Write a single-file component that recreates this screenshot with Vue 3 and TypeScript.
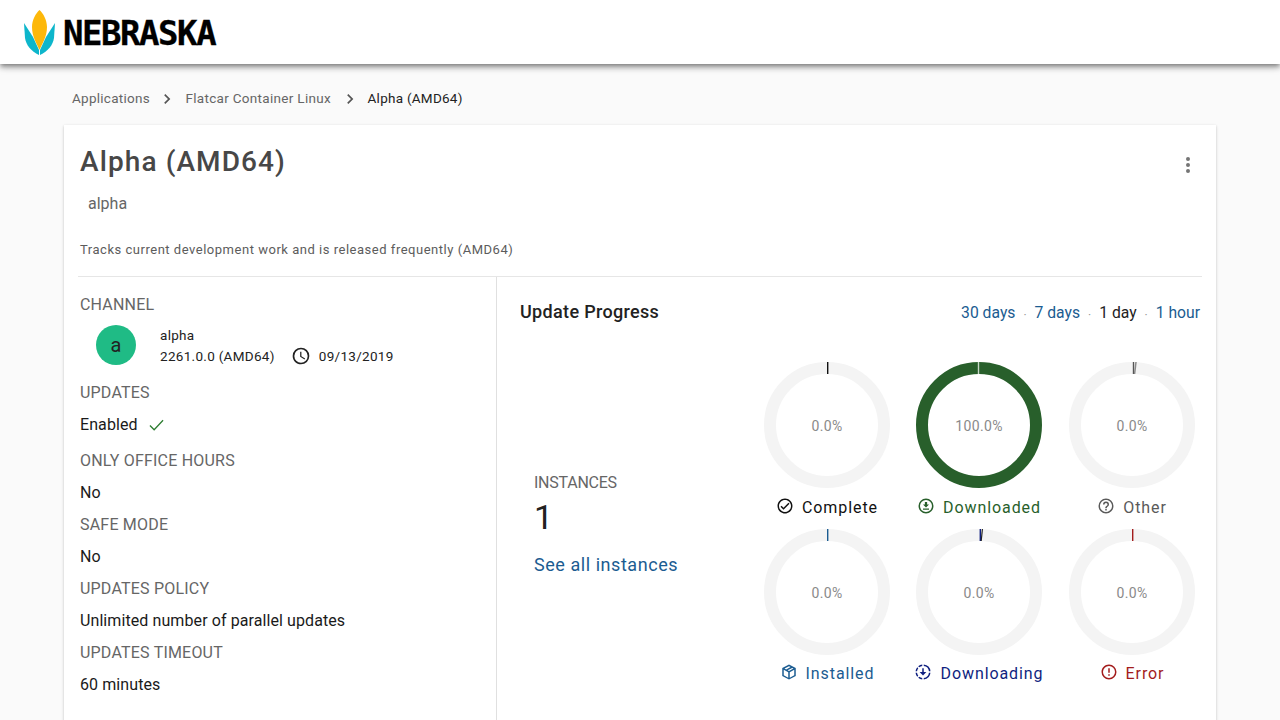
<script setup lang="ts">
interface Donut { label: string; value: string; color: string; icon: string; tick: string; tickX: number; fill?: boolean }

const icons: Record<string, string> = {
  complete: 'M12 2C6.5 2 2 6.5 2 12S6.5 22 12 22 22 17.5 22 12 17.5 2 12 2M12 20C7.59 20 4 16.41 4 12S7.59 4 12 4 20 7.59 20 12 16.41 20 12 20M16.59 7.58L10 14.17L7.41 11.59L6 13L10 17L18 9L16.59 7.58Z',
  downloaded: 'M12 2A10 10 0 0 0 2 12A10 10 0 0 0 12 22A10 10 0 0 0 22 12A10 10 0 0 0 12 2M12 20A8 8 0 0 1 4 12A8 8 0 0 1 12 4A8 8 0 0 1 20 12A8 8 0 0 1 12 20M8 17H16V15.2H8V17M16 10H13.5V6.5H10.5V10H8L12 14L16 10Z',
  other: 'M11,18H13V16H11V18M12,2A10,10 0 0,0 2,12A10,10 0 0,0 12,22A10,10 0 0,0 22,12A10,10 0 0,0 12,2M12,20C7.59,20 4,16.41 4,12C4,7.59 7.59,4 12,4C16.41,4 20,7.59 20,12C20,16.41 16.41,20 12,20M12,6A4,4 0 0,0 8,10H10A2,2 0 0,1 12,8A2,2 0 0,1 14,10C14,12 11,11.75 11,15H13C13,12.75 16,12.5 16,10A4,4 0 0,0 12,6Z',
  installed: 'M12 2L3 6.8V17.2L12 22L21 17.2V6.8L12 2M12 4.3L14.1 5.4L8.2 8.6L6 7.4L12 4.3M16.2 6.5L18 7.4L12 10.6L10.2 9.7L16.2 6.5M5 9.1L11 12.3V19.5L5 16.2V9.1M19 9.1V16.2L13 19.5V12.3L19 9.1Z',
  downloading: 'M13 2.05V4.07A8 8 0 0 1 19.93 11H21.95A10 10 0 0 0 13 2.05M11 2.05A10 10 0 0 0 5.6 4.3L7 5.7A8 8 0 0 1 11 4.07V2.05M4.3 5.6A10 10 0 0 0 2.05 11H4.07A8 8 0 0 1 5.7 7L4.3 5.6M2.05 13A10 10 0 0 0 4.3 18.4L5.7 17A8 8 0 0 1 4.07 13H2.05M7 18.3L5.6 19.7A10 10 0 0 0 11 21.95V19.93A8 8 0 0 1 7 18.3M19.93 13A8 8 0 0 1 13 19.93V21.95A10 10 0 0 0 21.95 13H19.93M11 7V12H7.5L12 16.5L16.5 12H13V7H11Z',
  error: 'M11,15H13V17H11V15M11,7H13V13H11V7M12,2C6.47,2 2,6.5 2,12A10,10 0 0,0 12,22A10,10 0 0,0 22,12A10,10 0 0,0 12,2M12,20A8,8 0 0,1 4,12A8,8 0 0,1 12,4A8,8 0 0,1 20,12A8,8 0 0,1 12,20Z'
}

const donuts: Donut[] = [
  { label: 'Complete', value: '0.0%', color: '#111111', icon: 'complete', tick: '#111111', tickX: 63.7 },
  { label: 'Downloaded', value: '100.0%', color: '#285f2b', icon: 'downloaded', tick: '#c8d8c8', tickX: 62.5, fill: true },
  { label: 'Other', value: '0.0%', color: '#5a5a5a', icon: 'other', tick: '#555555', tickX: 64.5 },
  { label: 'Installed', value: '0.0%', color: '#1b5c91', icon: 'installed', tick: '#1b5c91', tickX: 63.7 },
  { label: 'Downloading', value: '0.0%', color: '#0f1f80', icon: 'downloading', tick: '#0f1f80', tickX: 64.3 },
  { label: 'Error', value: '0.0%', color: '#a31c1c', icon: 'error', tick: '#a31c1c', tickX: 63.7 }
]

const fields = [
  { title: 'ONLY OFFICE HOURS', value: 'No' },
  { title: 'SAFE MODE', value: 'No' },
  { title: 'UPDATES POLICY', value: 'Unlimited number of parallel updates' },
  { title: 'UPDATES TIMEOUT', value: '60 minutes' }
]

const chevron = 'M8.59,16.58L13.17,12L8.59,7.41L10,6L16,12L10,18L8.59,16.58Z'
const dots = 'M12,16A2,2 0 0,1 14,18A2,2 0 0,1 12,20A2,2 0 0,1 10,18A2,2 0 0,1 12,16M12,10A2,2 0 0,1 14,12A2,2 0 0,1 12,14A2,2 0 0,1 10,12A2,2 0 0,1 12,10M12,4A2,2 0 0,1 14,6A2,2 0 0,1 12,8A2,2 0 0,1 10,6A2,2 0 0,1 12,4Z'
const clock = 'M12,20A8,8 0 0,0 20,12A8,8 0 0,0 12,4A8,8 0 0,0 4,12A8,8 0 0,0 12,20M12,2A10,10 0 0,1 22,12A10,10 0 0,1 12,22C6.47,22 2,17.5 2,12A10,10 0 0,1 12,2M12.5,7V12.25L17,14.92L16.25,16.15L11,13V7H12.5Z'
</script>

<template>
  <div class="page">
    <header class="bar">
      <svg class="mark" width="31" height="46" viewBox="0 0 31 46" aria-hidden="true">
        <path d="M0 13 L9 27 L15 40 L15 45 C7 41 2 35 1 28 Z" fill="#0db6cb" />
        <path d="M31 13 L22 27 L16 40 L16 45 C24 41 29 35 30 28 Z" fill="#0db6cb" />
        <path d="M15.5 0 C19 3 23 10 23 17 C23 27 18 34 15.5 40 C13 34 8 27 8 17 C8 10 12 3 15.5 0 Z" fill="#fdb80a" />
      </svg>
      <span class="word">NEBRASKA</span>
    </header>

    <nav class="crumbs">
      <span class="crumb">Applications</span>
      <svg class="chev" viewBox="0 0 24 24"><path :d="chevron" /></svg>
      <span class="crumb mid">Flatcar Container Linux</span>
      <svg class="chev" viewBox="0 0 24 24"><path :d="chevron" /></svg>
      <span class="crumb current">Alpha (AMD64)</span>
    </nav>

    <main class="card">
      <section class="head">
        <div class="title-row">
          <h1>Alpha (AMD64)</h1>
          <svg class="more" viewBox="0 0 24 24"><path :d="dots" /></svg>
        </div>
        <div class="sub">alpha</div>
        <p class="desc">Tracks current development work and is released frequently (AMD64)</p>
      </section>

      <section class="body">
        <aside class="left">
          <h2>CHANNEL</h2>
          <div class="channel">
            <div class="avatar">a</div>
            <div class="channel-text">
              <div>alpha</div>
              <div class="version">
                <span>2261.0.0 (AMD64)</span>
                <svg class="clock" viewBox="0 0 24 24"><path :d="clock" /></svg>
                <span>09/13/2019</span>
              </div>
            </div>
          </div>
          <h2 class="updates">UPDATES</h2>
          <div class="value enabled">
            Enabled
            <svg class="tick" viewBox="0 0 16 12"><path d="M1 6.5 L5.5 11 L15 1" /></svg>
          </div>
          <div v-for="f in fields" :key="f.title" class="field">
            <h2>{{ f.title }}</h2>
            <div class="value">{{ f.value }}</div>
          </div>
        </aside>

        <div class="right">
          <div class="right-head">
            <h3>Update Progress</h3>
            <div class="ranges">
              <a>30 days</a><i>·</i><a>7 days</a><i>·</i><span>1 day</span><i>·</i><a>1 hour</a>
            </div>
          </div>
          <div class="progress">
            <div class="instances">
              <h2>INSTANCES</h2>
              <div class="count">1</div>
              <a class="all">See all instances</a>
            </div>
            <div class="donuts">
              <div v-for="d in donuts" :key="d.label" class="donut">
                <div class="ring">
                  <svg width="126" height="126" viewBox="0 0 126 126">
                    <circle cx="63" cy="63" r="57" fill="none" stroke-width="12" :stroke="d.fill ? d.color : '#f4f4f4'" />
                    <line :x1="d.tickX" y1="0" :x2="d.tickX" y2="12" stroke-width="1.4" :stroke="d.tick" />
                    <line v-if="d.label === 'Other'" x1="67" y1="0" x2="65.6" y2="12" stroke-width="1.5" stroke="#8a8a8a" />
                    <line v-if="d.label === 'Downloading'" x1="66.4" y1="0" x2="65.2" y2="12" stroke-width="1.2" stroke="#222222" />
                  </svg>
                  <span class="pct">{{ d.value }}</span>
                </div>
                <div class="label" :style="{ color: d.color }">
                  <svg class="lab-icon" viewBox="0 0 24 24"><path :d="icons[d.icon]" /></svg>
                  <span>{{ d.label }}</span>
                </div>
              </div>
            </div>
          </div>
        </div>
      </section>
    </main>
  </div>
</template>

<style>
html, body { margin: 0; height: 100%; overflow: hidden; background: #fafafa; }
</style>

<style scoped>
.page { height: 720px; overflow: hidden; font-family: Roboto, "Liberation Sans", sans-serif; color: #1a1a1a; background: #fafafa; }
.bar { height: 64px; background: #fff; display: flex; align-items: center; padding-left: 24px; box-shadow: 0 2px 4px -1px rgba(0,0,0,.3), 0 4px 5px rgba(0,0,0,.22), 0 1px 10px rgba(0,0,0,.18); position: relative; box-sizing: border-box; }
.mark { margin-top: 2px; flex: none; }
.word { margin-left: 8px; font-family: "DejaVu Sans Mono", monospace; font-weight: 700; font-size: 34px; line-height: 1; letter-spacing: -1.45px; color: #000; -webkit-text-stroke: .3px #000; margin-top: 1px; }
.crumbs { display: flex; align-items: center; height: 28px; margin-top: 20px; padding-left: 72px; font-size: 13.5px; letter-spacing: .26px; color: #666; }
.chev { width: 20px; height: 20px; fill: #555; margin: 1px 8px 0 7.5px; }
.mid { letter-spacing: .31px; }
.mid + .chev { margin-left: 8.5px; }
.current { color: #222; }
.card { margin: 13px 64px 0; background: #fff; height: 640px; box-sizing: border-box; padding: 0 14px; box-shadow: 0 1px 3px rgba(0,0,0,.16), 0 1px 2px rgba(0,0,0,.08); }
.head { height: 152px; box-sizing: border-box; border-bottom: 1px solid #e6e6e6; padding: 19px 2px 0; }
.title-row { display: flex; justify-content: space-between; align-items: flex-start; height: 36px; }
h1 { margin: 0; font-size: 28px; line-height: 36px; font-weight: 500; color: #474747; letter-spacing: 1.1px; }
.more { width: 24px; height: 24px; fill: #757575; margin: 9px 0 0 0; }
.sub { margin: 12px 0 0 8px; font-size: 16px; line-height: 24px; color: #666; }
.desc { margin: 25px 0 0; font-size: 13px; line-height: 18px; letter-spacing: .52px; color: #5c5c5c; }
.body { display: flex; height: 460px; }
.left { width: 416px; flex: none; border-right: 1px solid #e0e0e0; box-sizing: content-box; padding-left: 2px; }
h2 { margin: 0; font-size: 16px; line-height: 24px; font-weight: 400; color: #666; letter-spacing: .2px; }
.left > h2:first-child { margin-top: 16px; }
.channel { display: flex; align-items: center; margin-top: 4px; height: 48px; }
.avatar { width: 40px; height: 40px; border-radius: 50%; background: #1fbb85; margin-left: 16px; display: flex; align-items: center; justify-content: center; font-size: 20px; color: #222; }
.channel-text { margin-left: 24px; font-size: 13.5px; line-height: 21px; letter-spacing: .3px; color: #222; margin-top: 1px; }
.version { display: flex; align-items: center; }
.clock { width: 20px; height: 20px; fill: #222; margin: 0 8px 0 16px; }
.updates { margin-top: 12px; }
.value { font-size: 16px; line-height: 24px; color: #1a1a1a; margin-top: 8px; letter-spacing: .09px; }
.enabled { display: flex; align-items: center; }
.tick { width: 15px; height: 12px; margin-left: 11px; fill: none; stroke: #2e7d32; stroke-width: 1.4; }
.field { margin-top: 8px; }
.enabled + .field { margin-top: 12px; }
.right { flex: 1; min-width: 0; margin-right: -14px; }
.right-head { display: flex; justify-content: space-between; align-items: center; padding: 23px 16px 0 23px; height: 24px; }
h3 { margin: 0; font-size: 18px; line-height: 24px; font-weight: 500; color: #222; letter-spacing: .33px; }
.ranges { display: flex; align-items: center; font-size: 15.7px; }
.ranges a { color: #1b5c91; }
.ranges span { color: #222; }
.ranges i { font-style: normal; color: #999; margin: 0 8px; font-size: 12px; line-height: 1; padding-top: 5px; }
.progress { display: flex; }
.instances { width: 217px; flex: none; box-sizing: border-box; padding: 147px 0 0 37px; }
.instances h2 { letter-spacing: -.25px; }
.count { font-size: 34px; line-height: 44px; color: #222; margin-top: 0; }
.all { display: block; margin-top: 14px; font-size: 18px; line-height: 24px; color: #1b5c91; letter-spacing: .55px; }
.donuts { display: grid; grid-template-columns: 152px 152px 154px; margin: 38px 0 0 37px; }
.donut { height: 167px; display: flex; flex-direction: column; align-items: center; }
.ring { position: relative; width: 126px; height: 126px; }
.ring svg { display: block; }
.pct { position: absolute; inset: 1px 0 0 0; display: flex; align-items: center; justify-content: center; font-size: 14px; letter-spacing: .35px; color: #8a8a8a; }
.label { display: flex; align-items: center; margin-top: 7px; height: 24px; font-size: 16px; letter-spacing: .92px; }
.donut:nth-child(n+4) .label { margin-top: 6px; }
.lab-icon { width: 18px; height: 18px; fill: currentColor; margin: -2px 8px 0 0; }
</style>
